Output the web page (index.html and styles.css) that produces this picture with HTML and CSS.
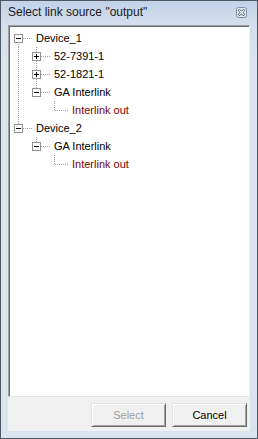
FILE: index.html
```html
<!DOCTYPE html>
<html>
<head>
<meta charset="utf-8">
<link rel="stylesheet" href="styles.css">
</head>
<body>
<div class="win">
  <div class="titlebar">
    <span class="title">Select link source "output"</span>
    <span class="close">
      <svg width="11" height="11" viewBox="0 0 11 11">
        <rect x="0.5" y="0.5" width="10" height="10" rx="2" fill="#e4ebf4" stroke="#7f90a6"/>
        <path d="M3.5 3.5 L7.5 7.5 M7.5 3.5 L3.5 7.5" stroke="#55657a" stroke-width="2.6" stroke-linecap="square"/>
        <path d="M3.5 3.5 L7.5 7.5 M7.5 3.5 L3.5 7.5" stroke="#ffffff" stroke-width="1.2" stroke-linecap="square"/>
      </svg>
    </span>
  </div>
  <div class="tree">
    <div class="row"><span class="c f h"><span class="bx minus"></span></span><span class="lbl">Device_1</span></div>
    <div class="row"><span class="c v"></span><span class="c t"><span class="bx plus"></span></span><span class="lbl">52-7391-1</span></div>
    <div class="row"><span class="c v"></span><span class="c t"><span class="bx plus"></span></span><span class="lbl">52-1821-1</span></div>
    <div class="row"><span class="c v"></span><span class="c e"><span class="bx minus"></span></span><span class="lbl">GA Interlink</span></div>
    <div class="row"><span class="c v"></span><span class="c"></span><span class="c e"></span><span class="lbl leaf">Interlink out</span></div>
    <div class="row"><span class="c e"><span class="bx minus"></span></span><span class="lbl">Device_2</span></div>
    <div class="row"><span class="c"></span><span class="c e"><span class="bx minus"></span></span><span class="lbl">GA Interlink</span></div>
    <div class="row"><span class="c"></span><span class="c"></span><span class="c e"></span><span class="lbl leaf">Interlink out</span></div>
  </div>
  <div class="footer">
    <button class="btn disabled">Select</button>
    <button class="btn">Cancel</button>
  </div>
</div>
</body>
</html>
```
FILE: styles.css
```css
html, body {
  margin: 0;
  padding: 0;
}
body {
  width: 258px;
  height: 439px;
  overflow: hidden;
  font-family: "Liberation Sans", Arial, sans-serif;
}
.win {
  box-sizing: border-box;
  width: 258px;
  height: 439px;
  border: 1px solid #4f5763;
  background: linear-gradient(to bottom, #c2d3e8 0px, #d3dfee 24px, #dae4f1 60px, #dae4f1 100%);
  display: flex;
  flex-direction: column;
}
.titlebar {
  height: 24px;
  flex: none;
  display: flex;
  align-items: center;
  justify-content: space-between;
  padding: 0 10px 0 7px;
}
.title {
  font-size: 12px;
  color: #1a1a1a;
  position: relative;
  top: -1px;
}
.close {
  display: flex;
  width: 11px;
  height: 11px;
  position: relative;
  top: -1px;
}
.tree {
  flex: none;
  box-sizing: border-box;
  margin: 0 7px;
  width: 242px;
  height: 372px;
  background: #fff;
  border-top: 1px solid #a0a0a0;
  border-left: 1px solid #a0a0a0;
  border-right: 1px solid #f0f0f0;
  border-bottom: 1px solid #e3e3e3;
  box-shadow: inset 1px 1px 0 #696969;
  padding: 3px 0 0 1px;
  font-size: 11px;
  color: #000;
}
.row {
  display: flex;
  height: 18px;
  line-height: 18px;
}
.c {
  flex: none;
  width: 18px;
  height: 18px;
  position: relative;
}
.c.v::before,
.c.t::before,
.c.e::before,
.c.f::before {
  content: "";
  position: absolute;
  left: 8px;
  width: 1px;
  background: repeating-linear-gradient(to bottom, #a0a0a0 0 1px, transparent 1px 2px);
}
.c.v::before, .c.t::before { top: 0; height: 18px; }
.c.e::before { top: 0; height: 10px; }
.c.f::before { top: 9px; height: 9px; }
.c.t::after,
.c.e::after,
.c.f::after {
  content: "";
  position: absolute;
  left: 9px;
  top: 9px;
  width: 13px;
  height: 1px;
  background: repeating-linear-gradient(to right, #a0a0a0 0 1px, transparent 1px 2px);
}
.bx {
  position: absolute;
  left: 4px;
  top: 5px;
  box-sizing: border-box;
  width: 9px;
  height: 9px;
  border: 1px solid #919191;
  background: #fff;
  z-index: 1;
}
.bx::before {
  content: "";
  position: absolute;
  left: 1px;
  top: 3px;
  width: 5px;
  height: 1px;
  background: #000;
}
.bx.plus::after {
  content: "";
  position: absolute;
  left: 3px;
  top: 1px;
  width: 1px;
  height: 5px;
  background: #000;
}
.lbl {
  margin-left: 8px;
  white-space: nowrap;
}
.lbl.leaf {
  color: #800000;
}
.footer {
  flex: none;
  box-sizing: border-box;
  margin: 0 7px;
  width: 242px;
  height: 34px;
  background: #f0f0f0;
  display: flex;
  justify-content: flex-end;
  align-items: flex-start;
  gap: 6px;
  padding: 6px 3px 0 0;
}
.btn {
  box-sizing: border-box;
  width: 75px;
  height: 24px;
  margin: 0;
  padding: 0;
  font-family: "Liberation Sans", Arial, sans-serif;
  font-size: 11px;
  color: #000;
  background: #f0f0f0;
  border-top: 1px solid #e3e3e3;
  border-left: 1px solid #e3e3e3;
  border-right: 1px solid #696969;
  border-bottom: 1px solid #696969;
  box-shadow: inset 1px 1px 0 #ffffff, inset -1px -1px 0 #a0a0a0;
}
.btn.disabled {
  color: #a0a0a0;
}
```
